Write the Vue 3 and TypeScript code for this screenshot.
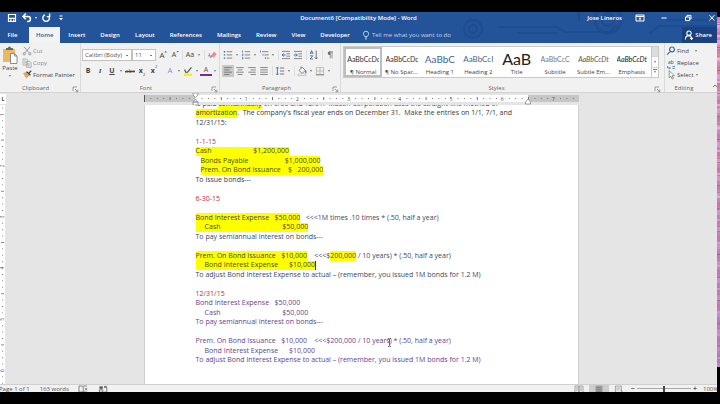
<script setup lang="ts">
import { h, ref, type FunctionalComponent } from 'vue'

interface Shape { d: string; s?: string; f?: string; w?: number }

// Glyphs are drawn on a 12 x 12 grid.
const G = '#6b6b6b'
const B = '#3c6ea8'
const W = '#ffffff'
const glyphs: Record<string, Shape[]> = {
  save: [
    { d: 'M2.5 2.5h7v7h-7z', s: W, w: 1.2 },
    { d: 'M3 5.8h6V7H3zM4 7.6h1.6v2H4zM7 7.6h1.4v2H7z', f: W },
  ],
  undo: [{ d: 'M2 4.5h5a2.4 2.4 0 0 1 0 4.9H6M4.8 1.6L2 4.5l2.8 2.8', s: W, w: 1.5 }],
  redo: [{ d: 'M8.8 4.2A3.3 3.3 0 1 1 5 3M9.6 1.6v3H6.8', s: W, w: 1.4 }],
  customise: [{ d: 'M4.5 3.5h3v1h-3zM4 6h4L6 8.2z', f: W }],
  display: [{ d: 'M2 3h8v6H2zM2 4.5h8M6 8.6V5.8M4.8 6.9L6 5.8l1.2 1.1', s: W, w: 1 }],
  minimise: [{ d: 'M3.4 6h5.2', s: W, w: 1 }],
  restore: [{ d: 'M3.5 5h4.2v3.6H3.5zM5 5V3.4h4V7H7.8', s: W, w: 1 }],
  close: [{ d: 'M3.4 3.2l5 5.4M8.4 3.2l-5 5.4', s: W, w: 1 }],
  bulb: [{ d: 'M4.8 7.4C3.6 6.6 3.4 5.6 3.4 4.8a2.6 2.6 0 0 1 5.2 0c0 .8-.2 1.8-1.4 2.6zM5 8.8h2M5.2 10h1.6', s: '#dfe8f4', w: 0.8 }],
  person: [{ d: 'M6 2a2.1 2.1 0 1 1 0 4.4A2.1 2.1 0 0 1 6 2M2.4 10.4c0-2.4 1.6-3.8 3.6-3.8M6 6.6c1 .1 1.8.5 2.4 1.2M7 9.4h3M8.5 7.9v3', s: W, w: 1.1 }],
  cut: [{ d: 'M3 1.8l5 6M9 1.8l-5 6M3.2 7.6a1.2 1.2 0 1 0 .1 2.4 1.2 1.2 0 0 0-.1-2.4M8.8 7.6a1.2 1.2 0 1 0 .1 2.4 1.2 1.2 0 0 0-.1-2.4', s: '#929292', w: 0.9 }],
  copy: [{ d: 'M2 2h3.6l1 1v5H2zM5.4 4.4h3.4l1.4 1.4v4.6H5.4zM3 4.2h1.8M3 6h1.8M6.4 7h2.6M6.4 8.8h2.6', s: '#a4a4a4', w: 0.8 }],
  brush: [
    { d: 'M2 4.2l4-1.6L8.6 6 5.4 9.4z', f: '#e0a562' },
    { d: 'M5.6 2.6l3.8 3.6M7.6 4.4l2.6-2.6', s: '#404040', w: 1.3 },
  ],
  grow: [{ d: 'M8.4 3.4l1.3-1.6L11 3.4z', f: B }],
  shrink: [{ d: 'M8.4 2l1.3 1.6L11 2z', f: B }],
  eraser: [
    { d: 'M5 6.6l3.2-3.8 2.6 2.2-3.2 3.8z', f: '#e58a9c' },
    { d: 'M2 6.8h2.4M3 4.2l1.6 4.6L6 6.8', s: '#8b6f9c', w: 0.8 },
  ],
  marker: [
    { d: 'M2 8.6h8v2.2H2z', f: '#f6f000' },
    { d: 'M5.4 7.4l4-5M2.6 4.6l1.2 2.8 1.8-.2', s: '#5a5a5a', w: 1.3 },
  ],
  bullets: [
    { d: 'M1.8 2h1.4v1.4H1.8zM1.8 5.2h1.4v1.4H1.8zM1.8 8.4h1.4v1.4H1.8z', f: B },
    { d: 'M4.8 2.7h5.4M4.8 5.9h5.4M4.8 9.1h5.4', s: G, w: 0.8 },
  ],
  numbers: [
    { d: 'M2.5 1.4v2.2M2 5h1v1.6H2M2 8.4h1v1.6H2', s: B, w: 0.7 },
    { d: 'M4.8 2.7h5.4M4.8 5.9h5.4M4.8 9.1h5.4', s: G, w: 0.8 },
  ],
  levels: [
    { d: 'M2.5 1.6v2M5 5v1.6M7.4 8.2v1.8', s: B, w: 0.8 },
    { d: 'M4 2.7h6.4M6.4 5.9h4.4M8.8 9.1h2.4', s: G, w: 0.8 },
  ],
  outdent: [
    { d: 'M2 2.4h8M6.4 4.8H10M6.4 7.2H10M2 9.6h8', s: G, w: 0.8 },
    { d: 'M5.6 6H2.2M3.6 4.5L2.1 6l1.5 1.5', s: B, w: 1 },
  ],
  indent: [
    { d: 'M2 2.4h8M6.4 4.8H10M6.4 7.2H10M2 9.6h8', s: G, w: 0.8 },
    { d: 'M1.8 6h3.4M3.8 4.5L5.3 6 3.8 7.5', s: B, w: 1 },
  ],
  sort: [
    { d: 'M2.2 5l1.4-3.4L5 5M2.7 4h1.8M2.2 6.8h2.6L2.2 10h2.8', s: B, w: 0.9 },
    { d: 'M8.2 1.6V10M6.8 8.4L8.2 10l1.4-1.6', s: G, w: 0.9 },
  ],
  pilcrow: [
    { d: 'M6.2 2.6h-.8a1.7 1.7 0 0 0 0 3.4h.8z', f: G },
    { d: 'M6.2 2.6v6.8M8 2.6v6.8M5.4 2.9h3.6', s: G, w: 0.7 },
  ],
  left: [{ d: 'M2.2 2.6h7.6M2.2 4.9h5.2M2.2 7.2h7.6M2.2 9.5h5.2', s: G, w: 0.8 }],
  centre: [{ d: 'M2.2 2.6h7.6M3.6 4.9h4.8M2.2 7.2h7.6M3.6 9.5h4.8', s: G, w: 0.8 }],
  right: [{ d: 'M2.2 2.6h7.6M4.6 4.9h5.2M2.2 7.2h7.6M4.6 9.5h5.2', s: G, w: 0.8 }],
  justify: [{ d: 'M2.2 2.6h7.6M2.2 4.9h7.6M2.2 7.2h7.6M2.2 9.5h7.6', s: G, w: 0.8 }],
  spacing: [
    { d: 'M3.4 2v8M2.2 3.4L3.4 2l1.2 1.4M2.2 8.6L3.4 10l1.2-1.4', s: B, w: 0.9 },
    { d: 'M6 3h4.2M6 6h4.2M6 9h4.2', s: G, w: 0.9 },
  ],
  bucket: [
    { d: 'M3 5.4L6.2 2.2 9.4 5.4 6.2 8.4zM5 3.4V1.4', s: G, w: 0.8 },
    { d: 'M9.8 5.6v2.6', s: B, w: 1.2 },
    { d: 'M2 9h8v1.6H2z', s: '#a8a8a8', f: W, w: 0.6 },
  ],
  borders: [
    { d: 'M2.4 2.4h7.2v7.2H2.4zM6 2.4v7.2M2.4 6h7.2', s: '#b4b4b4', w: 0.8 },
    { d: 'M2 9.8h8', s: '#777', w: 0.9 },
  ],
  find: [{ d: 'M7 2a2.4 2.4 0 1 1 0 4.8A2.4 2.4 0 0 1 7 2M5.2 6.4L2.2 9.6', s: B, w: 1.2 }],
  swap: [{ d: 'M2.6 8v2h2.6M4.4 9l1 1-1 1M7.4 8.4h2.6M7.4 10.4h2.6', s: B, w: 0.8 }],
  pointer: [{ d: 'M4.2 1.6v7.2l1.8-1.6 1.2 2.8 1.2-.6-1.2-2.6h2.2z', s: '#6a6a6a', f: W, w: 0.7 }],
  launcher: [{ d: 'M4 8V4h4M6 6l2.6 2.6M8.8 6.6v2.2H6.6', s: '#7a7a7a', w: 0.7 }],
  collapse: [{ d: 'M4 7l2-2 2 2', s: '#666', w: 0.9 }],
  proof: [{ d: 'M2 3h3.6l.6.6V9H2zM6.2 3.6l.6-.6H10M6.2 9H10M8 5l2.2 2.4M10.2 5L8 7.4', s: G, w: 0.8 }],
  macro: [
    { d: 'M2.4 3.4h3.4v2.4H2.4z', f: '#555' },
    { d: 'M2.4 6.8h3.4v2.4H2.4zM7 4.4h2.8v4.8H7M7 3.4h3', s: G, w: 0.9 },
  ],
  read: [{ d: 'M2 3h4v6.4H2zM6 3h4v6.4H6zM3 5h2M3 7h2M7 5h2M7 7h2', s: '#888', w: 0.7 }],
  print: [
    { d: 'M2.4 2.6h7.2v8H2.4z', f: '#a2a2a2' },
    { d: 'M3.4 4.4h5.2M3.4 6.4h5.2M3.4 8.4h5.2', s: '#7c7c7c', w: 0.8 },
  ],
  web: [{ d: 'M2.4 3h6v6.4h-6zM3.4 5h4M3.4 7h2.4M7 6.4l3 3M7 9.4a1.6 1.6 0 1 0 3.2 0', s: '#888', w: 0.7 }],
}

const Glyph: FunctionalComponent<{ name: string }> = (props) =>
  h(
    'svg',
    { viewBox: '0 0 12 12', width: 12, height: 12, 'aria-hidden': 'true' },
    glyphs[props.name].map((p) =>
      h('path', { d: p.d, fill: p.f ?? 'none', stroke: p.s ?? 'none', 'stroke-width': p.w ?? 1 }),
    ),
  )
Glyph.props = ['name']

const tabs = ['File', 'Home', 'Insert', 'Design', 'Layout', 'References', 'Mailings', 'Review', 'View', 'Developer']
const activeTab = ref('Home')

const styleSet = [
  { name: '¶ Normal', sample: 'AaBbCcDc', look: 'plain' },
  { name: '¶ No Spac...', sample: 'AaBbCcDc', look: 'plain' },
  { name: 'Heading 1', sample: 'AaBbC', look: 'first' },
  { name: 'Heading 2', sample: 'AaBbCcI', look: 'second' },
  { name: 'Title', sample: 'AaB', look: 'title' },
  { name: 'Subtitle', sample: 'AaBbCcC', look: 'sub' },
  { name: 'Subtle Em...', sample: 'AaBbCcDt', look: 'em' },
  { name: 'Emphasis', sample: 'AaBbCcDt', look: 'em dark' },
]
const activeStyle = ref('¶ Normal')

interface Run { t: string; hl?: boolean; caret?: boolean }
interface Line { tone?: string; runs: Run[] }
const text = (t: string, tone?: string): Line => ({ tone, runs: [{ t }] })
const mark = (t: string, tone = 'olive'): Line => ({ tone, runs: [{ t, hl: true }] })
const blank: Line = { runs: [] }
const sp = (n: number) => ' '.repeat(n)

const cashLine = `${sp(5)}Cash${sp(34)}$50,000`
const expenseLine = `${sp(5)}Bond Interest Expense${sp(6)}$10,000`
const adjust = 'To adjust Bond Interest Expense to actual – (remember, you issued 1M bonds for 1.2 M)'

const lines: Line[] = [
  { runs: [{ t: 'is paid ' }, { t: 'semiannually', hl: true }, { t: ' on 6/30 and 12/31.  Mason Corporation uses the straight-line method of' }] },
  { runs: [{ t: 'amortization', hl: true }, { t: '.  The company’s fiscal year ends on December 31.  Make the entries on 1/1, 7/1, and' }] },
  text('12/31/15:'),
  blank,
  text('1-1-15', 'red'),
  mark(`Cash${sp(23)}$1,200,000`),
  mark(`Bonds Payable${sp(20)}$1,000,000`, 'olive inset'),
  mark(`Prem. On Bond Issuance${sp(4)}$${sp(3)}200,000`, 'olive inset'),
  text('To issue bonds---'),
  blank,
  text('6-30-15', 'red'),
  blank,
  { tone: 'navy', runs: [{ t: 'Bond Interest Expense   $50,000', hl: true }, { t: '   <<<1M times .10 times * (.50, half a year)' }] },
  mark(cashLine),
  text('To pay semiannual interest on bonds---', 'navy'),
  blank,
  { tone: 'navy', runs: [{ t: 'Prem. On Bond Issuance   $10,000', hl: true }, { t: '    <<<$' }, { t: '200,000', hl: true }, { t: ' / 10 years) * (.50, half a year)' }] },
  { tone: 'olive', runs: [{ t: expenseLine, hl: true, caret: true }] },
  text(adjust, 'navy'),
  blank,
  text('12/31/15', 'red'),
  text('Bond Interest Expense   $50,000', 'purple'),
  text(cashLine, 'purple'),
  text('To pay semiannual interest on bonds---', 'purple'),
  blank,
  text('Prem. On Bond Issuance   $10,000    <<<$200,000 / 10 years) * (.50, half a year)', 'purple'),
  text(expenseLine, 'purple'),
  text(adjust, 'purple'),
]

// Length of one inch on the rulers, divided into eight steps.
const inch = 256 / 5
const ticks = Array.from({ length: 68 }, (_, i) => i).filter((i) => i % 8 !== 0)
const sideTicks = Array.from({ length: 44 }, (_, i) => i - 1).filter((i) => i % 8 !== 0)
const zoom = ref(50)
</script>

<template>
  <div class="screen">
    <div class="desk">
      <main class="window">
        <header class="head">
          <svg class="circuit" viewBox="0 0 300 31" aria-hidden="true">
            <g fill="none" stroke="#1c478a" stroke-width="2">
              <circle cx="56" cy="17" r="9" /><circle cx="56" cy="17" r="4" />
              <path d="M80 15h60l8 5h44l8-7M100 21h40M162 10V0" />
              <circle cx="191" cy="8" r="13" stroke-width="3" /><circle cx="191" cy="8" r="6" />
              <path d="M232 22l10-8h58M250 8h50" />
            </g>
          </svg>
          <div class="titlebar">
            <div class="quick">
              <button aria-label="Save"><Glyph name="save" /></button>
              <button class="split" aria-label="Undo"><Glyph name="undo" /></button>
              <button class="drop light" aria-label="Undo list"></button>
              <button aria-label="Repeat"><Glyph name="redo" /></button>
              <button aria-label="Customise toolbar"><Glyph name="customise" /></button>
            </div>
            <h1>Document6 [Compatibility Mode] - Word</h1>
            <div class="system">
              <span class="user">Jose Lineros</span>
              <button aria-label="Ribbon display options"><Glyph name="display" /></button>
              <button aria-label="Minimise"><Glyph name="minimise" /></button>
              <button aria-label="Restore"><Glyph name="restore" /></button>
              <button aria-label="Close"><Glyph name="close" /></button>
            </div>
          </div>
          <nav class="tabs">
            <button v-for="t in tabs" :key="t" :class="{ on: t === activeTab }" @click="activeTab = t">{{ t }}</button>
            <label class="tell"><Glyph name="bulb" /><input type="text" placeholder="Tell me what you want to do" aria-label="Tell me what you want to do" /></label>
            <button class="share"><Glyph name="person" />Share</button>
          </nav>
        </header>

        <section class="ribbon">
          <div class="group clipboard">
            <div class="tools">
              <button class="paste">
                <svg viewBox="0 0 16 18" width="16" height="18" aria-hidden="true">
                  <path d="M1 3h12v13H1z" fill="#eab765" /><path d="M4 4V2h2a1.5 1.5 0 0 1 3 0h2v2z" fill="#666" />
                  <path d="M8.5 7.5h4l2.5 2.500v7.500H8.500z" fill="#fff" stroke="#8c8c8c" /><path d="M12.5 7.5V10H15" fill="none" stroke="#8c8c8c" />
                </svg>
                <span>Paste</span><i class="arrow"></i>
              </button>
              <div class="stack">
                <button class="dim"><Glyph name="cut" />Cut</button>
                <button class="dim"><Glyph name="copy" />Copy</button>
                <button><Glyph name="brush" />Format Painter</button>
              </div>
            </div>
            <footer>Clipboard<button class="launch" aria-label="Clipboard settings"><Glyph name="launcher" /></button></footer>
          </div>

          <div class="group font">
            <div class="rows">
              <div class="row">
                <select class="family" aria-label="Font"><option>Calibri (Body)</option></select>
                <select class="size" aria-label="Font size"><option>11</option></select>
                <button class="glyph big" aria-label="Grow font">A<Glyph name="grow" /></button>
                <button class="glyph" aria-label="Shrink font">A<Glyph name="shrink" /></button>
                <i class="rule"></i>
                <button class="glyph" aria-label="Change case">Aa</button><button class="drop" aria-label="Case list"></button>
                <i class="rule"></i>
                <button aria-label="Clear formatting"><Glyph name="eraser" /></button>
              </div>
              <div class="row">
                <button class="glyph"><b>B</b></button>
                <button class="glyph serif"><b><em>I</em></b></button>
                <button class="glyph"><b><u>U</u></b></button><button class="drop" aria-label="Underline list"></button>
                <button class="glyph small"><s>abc</s></button>
                <button class="glyph"><b>x</b><sub>2</sub></button>
                <button class="glyph"><b>x</b><sup>2</sup></button>
                <i class="rule faint"></i>
                <button class="glyph outline" aria-label="Text effects">A</button><button class="drop" aria-label="Effect list"></button>
                <button aria-label="Highlight"><Glyph name="marker" /></button><button class="drop" aria-label="Highlight list"></button>
                <button class="glyph ink" aria-label="Font colour">A</button><button class="drop" aria-label="Colour list"></button>
              </div>
            </div>
            <footer>Font<button class="launch" aria-label="Font settings"><Glyph name="launcher" /></button></footer>
          </div>

          <div class="group para">
            <div class="rows">
              <div class="row">
                <button aria-label="Bullets"><Glyph name="bullets" /></button><button class="drop" aria-label="Bullet list"></button>
                <button aria-label="Numbering"><Glyph name="numbers" /></button><button class="drop" aria-label="Number list"></button>
                <button aria-label="Multilevel"><Glyph name="levels" /></button><button class="drop" aria-label="Level list"></button>
                <i class="rule"></i>
                <button aria-label="Decrease indent"><Glyph name="outdent" /></button>
                <button aria-label="Increase indent"><Glyph name="indent" /></button>
                <i class="rule"></i>
                <button aria-label="Sort"><Glyph name="sort" /></button>
                <i class="rule"></i>
                <button aria-label="Show marks"><Glyph name="pilcrow" /></button>
              </div>
              <div class="row">
                <button class="pressed" aria-label="Align left"><Glyph name="left" /></button>
                <button aria-label="Centre"><Glyph name="centre" /></button>
                <button aria-label="Align right"><Glyph name="right" /></button>
                <button aria-label="Justify"><Glyph name="justify" /></button>
                <i class="rule"></i>
                <button aria-label="Line spacing"><Glyph name="spacing" /></button><button class="drop" aria-label="Spacing list"></button>
                <i class="rule"></i>
                <button aria-label="Shading"><Glyph name="bucket" /></button><button class="drop" aria-label="Shading list"></button>
                <button aria-label="Borders"><Glyph name="borders" /></button><button class="drop" aria-label="Border list"></button>
              </div>
            </div>
            <footer>Paragraph<button class="launch" aria-label="Paragraph settings"><Glyph name="launcher" /></button></footer>
          </div>

          <div class="group styles">
            <div class="gallery">
              <button v-for="s in styleSet" :key="s.name" class="style" :class="{ on: s.name === activeStyle }" @click="activeStyle = s.name">
                <span class="sample" :class="s.look">{{ s.sample }}</span>
                <span>{{ s.name }}</span>
              </button>
              <div class="scroller">
                <button class="off" aria-label="Previous styles"></button>
                <button aria-label="Next styles"><i class="arrow"></i></button>
                <button aria-label="More styles"><i class="arrow bar"></i></button>
              </div>
            </div>
            <footer>Styles<button class="launch" aria-label="Style settings"><Glyph name="launcher" /></button></footer>
          </div>

          <div class="group editing">
            <div class="stack">
              <button><Glyph name="find" />Find<i class="arrow far"></i></button>
              <button><span class="ab">ab<Glyph name="swap" /></span>Replace</button>
              <button><Glyph name="pointer" />Select<i class="arrow"></i></button>
            </div>
            <footer>Editing</footer>
          </div>
          <button class="collapse" aria-label="Collapse the ribbon"><Glyph name="collapse" /></button>
        </section>

        <div class="rulerbar">
          <button class="tabstop" aria-label="Tab stop">L</button>
          <svg class="ruler" viewBox="0 0 435 12" aria-hidden="true">
            <path d="M0 2h435v7H0z" fill="#c6c6c6" /><path d="M51 2h333v7H51z" fill="#fff" />
            <path d="M0 2h1v7H0z" fill="#555" />
            <rect v-for="i in ticks" :key="i" :x="i * inch / 8" :y="i % 4 ? 5 : 4" width="1" :height="i % 4 ? 1 : 3" fill="#777" />
            <text v-for="n in 7" :key="n" :x="n * inch + 51" y="8">{{ n }}</text>
            <path d="M49 0h5v2l-2.500 2.500L49 2zM49 9l2.500-3L54 9zM49 9h5v3h-5zM381.500 9v2h5V9L384 6z" fill="#fff" stroke="#888" stroke-width=".8" />
          </svg>
        </div>

        <section class="work">
          <svg class="side" viewBox="0 0 5 279" preserveAspectRatio="xMinYMin slice" aria-hidden="true">
            <rect v-for="i in sideTicks" :key="i" :x="i % 4 ? 2 : 1" :y="9 + (i * inch) / 8" :width="i % 4 ? 1 : 3" height="1" fill="#8a8a8a" />
            <text v-for="n in 6" :key="n" :transform="`translate(4 ${11 + (n - 1) * inch}) rotate(-90)`">{{ n }}</text>
          </svg>
          <div class="canvas">
            <article class="page">
              <div class="body">
                <p v-for="(l, i) in lines" :key="i" :class="l.tone">
                  <span v-for="(r, j) in l.runs" :key="j" :class="{ hl: r.hl, caret: r.caret }">{{ r.t }}</span>
                </p>
              </div>
              <svg class="beam" viewBox="0 0 5 9" aria-hidden="true"><path d="M1 .5h1l.5.5.5-.5h1M2.500 1v7M1 8.500h1l.5-.5.5.5h1" fill="none" stroke="#444" stroke-width=".8" /></svg>
            </article>
          </div>
        </section>

        <footer class="status">
          <span>Page 1 of 1</span><span class="words">163 words</span>
          <button aria-label="Proofing"><Glyph name="proof" /></button>
          <button class="gap" aria-label="Macro"><Glyph name="macro" /></button>
          <div class="views">
            <button aria-label="Read mode"><Glyph name="read" /></button>
            <button class="current" aria-label="Print layout"><Glyph name="print" /></button>
            <button aria-label="Web layout"><Glyph name="web" /></button>
          </div>
          <button class="sign" aria-label="Zoom out">−</button>
          <input v-model="zoom" type="range" min="0" max="100" aria-label="Zoom" />
          <button class="sign" aria-label="Zoom in">+</button>
          <span class="percent">100%</span>
        </footer>
      </main>
      <aside class="edge"></aside>
    </div>
  </div>
</template>

<style>
body { background: #000; overflow: hidden; }
</style>

<style scoped>
* { box-sizing: border-box; }
.screen { height: 100vh; padding: 12px 0; background: #000; font-family: "Open Sans", "Noto Sans", sans-serif; font-size: 6px; line-height: 8px; color: #444; }
.desk { display: flex; height: 100%; }
.window { flex: 1; min-width: 0; display: flex; flex-direction: column; background: #e5e5e5; }
.edge { width: 3px; margin: 5px 0 25px; background: linear-gradient(#ff60a000, #9a70d088), repeating-linear-gradient(#ffffff00 0 7px, #a8405080 7px 8px, #ffffff00 8px 18px, #ffd0f0a0 18px 20px, #ffffff00 20px 23px), repeating-linear-gradient(#f070b0 0 3px, #e884a8 3px 5px, #dc7890 5px 6px, #f898d0 6px 11px, #d888c0 11px 15px, #e0788c 15px 17px); }
button { display: flex; align-items: center; justify-content: center; padding: 0; border: 0; background: none; font: inherit; color: inherit; white-space: nowrap; }
svg { display: block; flex: none; }

.head { position: relative; background: #23549a; color: #fff; overflow: hidden; }
.circuit { position: absolute; right: 0; top: 0; width: 300px; height: 31px; opacity: .6; }
.titlebar { position: relative; display: grid; grid-template-columns: 1fr auto 1fr; align-items: center; height: 15px; padding-bottom: 4px; }
.titlebar h1 { margin: 0; font-size: 6px; font-weight: 600; line-height: 10px; }
.quick, .system { display: flex; align-items: center; height: 12px; }
.quick { padding-left: 6px; }
.quick button { width: 12px; margin-right: 3px; }
.quick .split { margin-right: 0; }
.quick .drop { width: 6px; margin-right: 1px; }
.system { justify-content: flex-end; gap: 12px; font-weight: 600; }
.system button { width: 12px; }
.system button:last-child { margin-right: -1px; }
.tabs { position: relative; display: flex; gap: 1px; height: 16px; font-weight: 600; }
.tabs > button { padding: 0 7px; }
.tabs > button:first-child { width: 28px; padding: 0 10px 0 7px; }
.tabs .on { background: #f3f3f3; color: #2b5b9e; }
.tell { display: flex; align-items: center; margin-left: 2px; }
.tell input { width: 100px; padding: 0; border: 0; background: none; font: inherit; font-weight: 400; color: #fff; }
.tell input::placeholder { color: #c3d3ea; opacity: 1; }
.tabs .share { margin-left: auto; padding: 0 5px 0 1px; background: #1a4280; }

.arrow { width: 0; height: 0; border: 1px solid transparent; border-top: 2px solid #777; border-bottom: 0; }
.drop { width: 6px; }
.drop::after { content: ""; border: 1px solid transparent; border-top: 2px solid #777; border-bottom: 0; }
.drop.light::after { border-top-color: #fff; }

.ribbon { display: flex; height: 50px; background: #f1f1f1; border-bottom: 1px solid #d2d2d2; }
.group { position: relative; display: flex; flex-direction: column; justify-content: space-between; border-right: 1px solid #dadada; }
.group footer { position: relative; height: 8px; padding-right: 9px; text-align: center; color: #666; }
.launch { position: absolute; right: -1px; top: -1px; width: 12px; height: 12px; }
.clipboard { width: 81px; }
.tools { display: flex; }
.paste { flex-direction: column; justify-content: flex-start; width: 20px; padding-top: 3px; }
.paste .arrow { margin-top: 3px; }
.stack { display: flex; flex-direction: column; padding-top: 2px; }
.stack button { justify-content: flex-start; height: 12px; }
.tools .stack { padding-left: 1px; }
.dim { color: #8c8c8c; }
.rows { display: flex; flex-direction: column; gap: 4px; padding-top: 6px; }
.row { display: flex; height: 12px; }
.row > button { width: 12px; height: 12px; }
.row > .drop { width: 6px; }
.rule { width: 1px; height: 10px; margin: 1px 1px 1px 2px; background: #dedede; }
.faint { visibility: hidden; }
.font { width: 139px; padding-left: 1px; }
.para { width: 121px; padding-left: 2px; }
select { height: 12px; padding: 0 0 0 2px; border: 1px solid #c2c2c2; border-radius: 0; color: #555; font: inherit; appearance: none; background: linear-gradient(#777, #777) calc(100% - 3px) 5px / 2px 1px no-repeat #fff; }
.family { width: 50px; }
.size { width: 24px; }
.glyph { position: relative; font-size: 7px; color: #444; }
.glyph svg { position: absolute; left: 0; top: 0; }
.big { font-size: 8px; }
.small { font-size: 6px; }
.serif { font-family: "Liberation Serif", serif; }
.glyph sub, .glyph sup { font-size: 4px; line-height: 4px; }
.glyph sub { align-self: flex-end; }
.glyph sup { align-self: flex-start; }
.outline { color: #6d97cc; }
.row .ink { height: 11px; border-bottom: 2px solid #7a2aa0; color: #555; }
.pressed { background: #c8c8c8; }

.styles { flex: 1; min-width: 0; padding: 3px 5px 0 2px; }
.gallery { display: flex; height: 32px; border: 1px solid #c9c9c9; background: #fff; }
.style { flex: 1; min-width: 0; flex-direction: column; justify-content: flex-end; gap: 1px; padding-bottom: 1px; overflow: hidden; }
.style.on { outline: 2px solid #bdbdbd; outline-offset: -2px; }
.sample { display: flex; align-items: center; max-width: 32px; height: 17px; overflow: hidden; font-family: Lato, sans-serif; font-size: 7px; color: #333; }
.first { font-size: 10px; color: #3f6596; }
.second { font-size: 8px; color: #3f6596; }
.title { font-size: 16px; color: #222; }
.sub { color: #777; }
.em { font-style: italic; color: #555; }
.dark { color: #222; }
.scroller { display: flex; flex-direction: column; width: 7px; border-left: 1px solid #c9c9c9; }
.scroller button { flex: 1; }
.scroller button + button { border-top: 1px solid #d4d4d4; }
.scroller .off { background: #ddd; }
.bar { position: relative; }
.bar::before { content: ""; position: absolute; left: -2px; top: -4px; width: 4px; height: 1px; background: #777; }
.styles .launch { right: -4px; }
.editing { width: 44px; border-right: 0; }
.editing footer { padding-right: 6px; }
.editing .arrow { margin-left: 2px; }
.editing .far { margin-left: 6px; }
.ab { position: relative; width: 12px; padding-bottom: 3px; font-size: 5px; }
.ab svg { position: absolute; left: 0; top: 0; }
.collapse { width: 12px; margin: 0 -4px 0 auto; align-items: flex-end; }

.rulerbar { position: relative; display: flex; justify-content: center; height: 12px; padding-left: 5px; }
.tabstop { position: absolute; left: 0; top: 1px; width: 6px; height: 10px; background: #fff; font-size: 5px; font-weight: 700; }
.ruler { width: 435px; height: 12px; }
.ruler text { font-size: 5px; text-anchor: middle; fill: #444; }
.work { flex: 1; min-height: 0; display: flex; }
.side { width: 5px; height: 100%; background: #fff; }
.side text { font-size: 5px; fill: #555; }
.canvas { flex: 1; display: flex; justify-content: center; }
.page { position: relative; width: min(435px, 100%); padding: 0 51px; background: #fff; border: 0 solid #cfcfcf; border-width: 0 1px; overflow: hidden; font-size: 7px; color: #3a3a3a; }
.body { display: grid; grid-template-rows: repeat(30, 1fr); height: calc(100% + 6px); margin-top: -6px; }
.body p { display: flex; align-items: stretch; min-height: 0; margin: 0; white-space: pre; }
.body span { display: flex; align-items: center; white-space: pre; }
.hl { background: #ffff00; }
.caret { border-right: 1px solid #333; }
.body .red { color: #c22a3e; }
.body .olive { color: #4a4a18; }
.body .inset { padding-left: 5px; }
.body .navy { color: #3b4763; }
.body .purple { color: #5f4390; }
.beam { position: absolute; left: 242px; top: 233px; width: 5px; height: 9px; }

.status { display: flex; align-items: center; height: 8px; overflow: hidden; background: #f1f1f1; border-top: 1px solid #cfcfcf; color: #555; }
.status button { width: 12px; }
.status > span:first-child { margin-left: -1px; }
.words { margin: 0 8px 0 10px; }
.gap { margin-left: 8px; }
.views { display: flex; gap: 4px; margin: 0 4px 0 auto; }
.status .views .current { width: 20px; background: #cdcdcd; }
.status .sign { width: 8px; font-size: 7px; font-weight: 700; }
.status input { width: 54px; height: 7px; margin: 0; background: linear-gradient(#aaa, #aaa) 0 50% / 100% 1px no-repeat; appearance: none; }
.status input::-webkit-slider-thumb { width: 2px; height: 6px; background: #444; appearance: none; }
.percent { width: 14px; margin-left: 4px; overflow: hidden; }
</style>
